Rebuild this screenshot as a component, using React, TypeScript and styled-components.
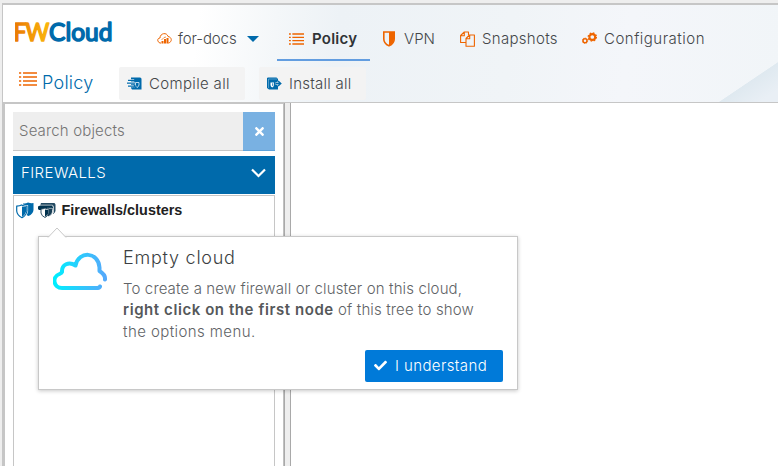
import React from "react";
import styled, { createGlobalStyle } from "styled-components";
import { FaCheck, FaTimes } from "react-icons/fa";

const GlobalStyle = createGlobalStyle`
  *, *::before, *::after { box-sizing: border-box; }
  body {
    margin: 0;
    background: #eeeeee;
    overflow: hidden;
    color: #404244;
    font-family: Inter, "Open Sans", sans-serif;
  }
  svg { display: block; flex: none; }
`;

const Frame = styled.div`
  height: 466px;
  padding: 3px 0 0 2px;
  display: flex;
  flex-direction: column;
`;

const Header = styled.header`
  height: 100px;
  flex: none;
  border-top: 2px solid #c6c6c6;
  border-left: 1px solid #c6c6c6;
  border-bottom: 1px solid #c6c6c6;
  background:
    linear-gradient(146deg, transparent 0 50%, #dfe9f0 51%, #e9eff5 85%) right bottom / 60px 40px no-repeat,
    linear-gradient(97deg, #ffffff 0 25%, #f4f7f9 35%, #edf2f6 43%, #f0f4f7 65%, #f4f6fa 80%, #f1f5f8 100%);
`;

const TopBar = styled.div`
  display: flex;
  height: 56px;
`;

const LogoBox = styled.div`
  width: 118px;
  padding: 10px 0 0 12px;
`;

const NavItem = styled.div<{ $width: number; $pad: number; $gap: number; $active?: boolean }>`
  display: flex;
  align-items: center;
  width: ${p => p.$width}px;
  height: 56px;
  padding: 13px 0 0 ${p => p.$pad}px;
  gap: ${p => p.$gap}px;
  border-bottom: 2px solid ${p => (p.$active ? "#629de0" : "transparent")};
`;

const Label = styled.span<{ $size?: number; $track?: number; $weight?: number; $color?: string }>`
  font-size: ${p => p.$size ?? 15}px;
  font-weight: ${p => p.$weight ?? 350};
  letter-spacing: ${p => p.$track ?? 0}px;
  color: ${p => p.$color ?? "#44474a"};
  line-height: 20px;
  white-space: nowrap;
`;

const Caret = styled.i`
  border: 6px solid transparent;
  border-top: 6px solid #006aab;
  border-bottom: 0;
  margin-left: 4px;
`;

const ActionBar = styled.div`
  display: flex;
  padding: 6px 0 0 16px;
`;

const PageTitle = styled.div`
  display: flex;
  width: 100px;
  gap: 5px;
  padding-top: 4px;
  span { padding-top: 2px; line-height: 20px; }
`;

const Action = styled.button<{ $width: number }>`
  display: flex;
  align-items: center;
  width: ${p => p.$width}px;
  height: 33px;
  margin-right: 14px;
  padding: 0 0 0 8px;
  gap: 7px;
  border: 0;
  border-radius: 2px;
  background: #f3f3f3;
  font-family: inherit;
`;

const Body = styled.div`
  display: flex;
  flex: 1;
  min-height: 0;
`;

const Sidebar = styled.aside`
  display: flex;
  flex-direction: column;
  width: 282px;
  padding: 8px 8px 0;
  border-top: 1px solid #c6c6c6;
  border-left: 3px solid #c6c6c6;
  border-right: 1px solid #c0c0c0;
  background: #fff;
`;

const Gutter = styled.div`
  width: 7px;
  border: solid #a9a9a9;
  border-width: 0 1px;
  background: #eee;
`;

const Workspace = styled.main`
  flex: 1;
  background: #fff;
`;

const Search = styled.div`
  display: flex;
  flex: none;
  height: 39px;
`;

const SearchField = styled.div`
  flex: 1;
  padding: 8px 0 0 6px;
  border-bottom: 1px solid #c6c6c6;
  background: #eee;
`;

const ClearButton = styled.button`
  display: flex;
  align-items: center;
  justify-content: center;
  width: 32px;
  padding: 0;
  border: 0;
  border-bottom: 1px solid #5ea2da;
  background: #79b1e2;
  color: #fff;
  font-size: 13px;
`;

const SectionHeader = styled.div`
  display: flex;
  flex: none;
  justify-content: space-between;
  height: 38px;
  margin-top: 5px;
  padding: 7px 9px 0 8px;
  background: #006aab;
  svg { margin-top: 5px; }
`;

const Tree = styled.div`
  flex: 1;
  margin-top: 1px;
  border: 1px solid #c6c6c6;
  border-bottom: 0;
`;

const TreeNode = styled.div`
  display: flex;
  align-items: center;
  gap: 4px;
  padding: 5px 0 0 2px;
  font: bold 14.4px/18px "Liberation Sans", Arial, sans-serif;
  color: #212121;
  span { padding-left: 1.5px; }
`;

const Popup = styled.section`
  position: absolute;
  left: 38px;
  top: 236px;
  display: flex;
  width: 480px;
  height: 154px;
  border: 1px solid #c8c8c8;
  background: #fff;
  box-shadow: 0 1px 4px rgba(0, 0, 0, 0.22);
`;

const Pointer = styled.svg`
  position: absolute;
  left: 8px;
  top: -10px;
`;

const PopupIcon = styled.div`
  width: 84px;
  padding: 15px 0 0 14px;
`;

const PopupContent = styled.div`
  flex: 1;
  display: flex;
  flex-direction: column;
  padding: 11px 14px 0 0;
`;

const Message = styled.p`
  margin: 10px 0 8px;
  display: flex;
  flex-direction: column;
`;

const MessageLine = styled.span`
  display: block;
  height: 21.33px;
  line-height: 20px;
  white-space: pre;
`;

const Confirm = styled.button`
  display: flex;
  align-items: center;
  align-self: flex-end;
  width: 138px;
  height: 32px;
  padding: 0 0 0 9px;
  gap: 8px;
  border: 0;
  border-radius: 2px;
  background: #007ad9;
  color: #fff;
  font-family: inherit;
  font-size: 13px;
`;

const Logo = () => (
  <svg width="102" height="34" viewBox="0 0 102 34">
    <defs>
      <linearGradient id="brand" x1="0" x2="1">
        <stop offset="0" stopColor="#e97803" />
        <stop offset="1" stopColor="#fbb80b" />
      </linearGradient>
    </defs>
    <g fontFamily="Lato, sans-serif" fontWeight="400" fontSize="25.5" strokeWidth="1.6" strokeLinejoin="round">
      <text x="-1.500" y="25.500" textLength="35" lengthAdjust="spacingAndGlyphs" letterSpacing="-1" fill="url(#brand)" stroke="url(#brand)">FW</text>
      <text x="34" y="25.500" textLength="63.500" lengthAdjust="spacingAndGlyphs" fill="#006aab" stroke="#006aab">Cloud</text>
    </g>
  </svg>
);

const ListIcon = ({ width, height }: { width: number; height: number }) => (
  <svg width={width} height={height} viewBox="0 0 18 16" stroke="#ee6500" strokeWidth="1.6">
    <path d="M0 2h2.200M4 2h14M0 6h2.200M4 6h14M0 10h2.200M4 10h14M0 14h2.200M4 14h14" />
  </svg>
);

const CloudChartIcon = () => (
  <svg width="15" height="14" viewBox="0 0 15 14" fill="none" stroke="#ee6500">
    <path d="M4 11H3C0 10 0 6 3 6C3 1 10 0 11 4.500C15 5 15.500 10 11.500 11" strokeWidth="1" />
    <path d="M5.500 11.500V9M8 11.500V7M10.500 11.500V6" strokeWidth="2" />
    <path d="M4.500 8L7 5.500L9 5" strokeWidth=".7" />
  </svg>
);

const ShieldIcon = () => (
  <svg width="12" height="16" viewBox="0 0 12 16">
    <path d="M.8 1H11.200V8C11.200 11 9 13.500 6 14.800C3 13.500.8 11 .8 8Z" fill="none" stroke="#ee6500" strokeWidth="1.6" />
    <path d="M6 1H11V8C11 11 9 13.500 6 14.800Z" fill="#ee6500" />
  </svg>
);

const CopyIcon = () => (
  <svg width="15" height="16" viewBox="0 0 15 16" fill="none" stroke="#ee6500" strokeWidth="1.1" strokeLinejoin="round">
    <path d="M6 11.500H.6V4.500L4.300 1H8.500V4M.6 4.700H4.300V1" />
    <path d="M6 7.500L9.500 4H14.400V15.200H6ZM6 7.700H9.700V4" />
  </svg>
);

const GearsIcon = () => (
  <svg width="15" height="13" viewBox="0 0 15 13" fill="none" stroke="#ee6500">
    <circle cx="10.300" cy="5" r="2.900" strokeWidth="2.100" />
    <circle cx="10.300" cy="5" r="4.100" strokeWidth="1.300" strokeDasharray="1.610 1.610" />
    <circle cx="3" cy="8.700" r="2" strokeWidth="1.500" />
    <circle cx="3" cy="8.700" r="2.700" strokeWidth=".8" strokeDasharray="1.060 1.060" />
  </svg>
);

const CompileIcon = () => (
  <svg width="15" height="13" viewBox="0 0 15 13">
    <path d="M4 .5H13Q14.500.5 14.500 2V12.500H5L4 11Z" fill="#006aab" />
    <path d="M8.500 5.500H12V8Q11.500 10 10 10.500Q8.500 9.500 8.500 8Z" fill="none" stroke="#cfe4f2" strokeWidth=".9" />
    <path d="M1 3.300H8M0 6.200H8M1 9.100H8" stroke="#fff" strokeWidth="2.200" />
    <path d="M1 3.300H9M0 6.200H8M1 9.100H8" stroke="#006aab" strokeWidth="1.300" />
    <path d="M7 2L9 3.300L7 4.500M6.500 7.800L8.500 9.100L6.500 10.400" fill="none" stroke="#006aab" />
  </svg>
);

const InstallIcon = () => (
  <svg width="15" height="13" viewBox="0 0 15 13">
    <path d="M0 1L1 .5H9.500L11 2V12.500H2L0 11Z" fill="#006aab" />
    <path d="M1.500 2H10M1.500 2V11" fill="none" stroke="#9cc8e4" strokeWidth=".5" />
    <path d="M3.500 5.500H7V8Q6.800 9.700 5.300 10.500Q3.500 9.500 3.500 8Z" fill="#fff" />
    <path d="M5.300 6.300H6.200V8.500L5.300 9.300Z" fill="#006aab" />
    <path d="M8.500 6.500H13.500M11 4L13.500 6.500L11 9" fill="none" stroke="#f3f3f3" strokeWidth="2.400" />
    <path d="M8.500 6.500H14M11 4L13.700 6.500L11 9" fill="none" stroke="#006aab" strokeWidth="1.500" />
  </svg>
);

const ShieldsIcon = () => (
  <svg width="18" height="17" viewBox="0 0 18 17">
    <path d="M7 1.500Q10 1.800 12 .5Q15 1.500 17.500 1V8Q17 12 12.500 14Q8 12 7 8Z" fill="#006aab" />
    <path d="M.7 4.200Q4 4 5.500 3Q8 4.500 11 4.200V9Q10 14 6 16Q1 13 .7 9Z" fill="#fff" stroke="#fff" strokeWidth="2.200" />
    <path d="M.7 4.200Q4 4 5.500 3Q8 4.500 11 4.200V9Q10 14 6 15.700Q1 13 .7 9Z" fill="#fff" stroke="#006aab" strokeWidth="1.200" />
    <path d="M6 4.500Q8 5.300 10.500 5V9Q9 13 6 15Z" fill="#006aab" />
  </svg>
);

const ClusterIcon = () => (
  <svg width="18" height="15" viewBox="0 0 18 15">
    <path d="M3 0H16.500L17.500 1.500V8Q17 10 15 11V3H2Z" fill="#234a62" />
    <path d="M1.500 2.200H14.500L15.500 3.500V10" fill="none" stroke="#fff" strokeWidth=".7" />
    <path d="M0 3.500L1.500 2.800H14L15 4V7H1L0 6Z" fill="#00324e" />
    <path d="M9 5.300H14.500V9Q14 12 10.500 13.500L8 11Z" fill="#183e56" stroke="#fff" strokeWidth=".6" />
    <path d="M3 6Q5.500 6 7 5Q9 6 11 6V10Q10 13 7 14.500Q3.500 13 3 10Z" fill="#fff" stroke="#183e56" strokeWidth=".9" />
    <path d="M7 6.500L10.500 7V10Q9.500 12.500 7 13.800Z" fill="#00324e" />
  </svg>
);

const EmptyCloudIcon = () => (
  <svg width="56" height="42" viewBox="0 0 56 42">
    <defs>
      <linearGradient id="sky" x1="0" x2="1">
        <stop offset="0" stopColor="#00eefe" />
        <stop offset="1" stopColor="#55a9fb" />
      </linearGradient>
    </defs>
    <path d="M47 34.500Q46.500 36 43 36H9C.5 36-1.500 25 6.500 22Q8.800 21 9 20C8.500 12.500 16 9 22.500 13.500C25.500-1.500 45.500-.5 46.500 15.500V19C50.500 21.500 52.500 24 52 27.500" fill="none" stroke="url(#sky)" strokeWidth="4" strokeLinejoin="round" strokeLinecap="round" />
  </svg>
);

export default function App() {
  return (
    <>
      <GlobalStyle />
      <Frame>
        <Header>
          <TopBar>
            <LogoBox><Logo /></LogoBox>
            <NavItem $width={156} $pad={36} $gap={6}>
              <CloudChartIcon /><Label $track={-0.1}>for-docs</Label><Caret />
            </NavItem>
            <NavItem $width={93} $pad={12} $gap={8} $active>
              <ListIcon width={15} height={14} />
              <Label $weight={600} $track={0.25} $color="#303336">Policy</Label>
            </NavItem>
            <NavItem $width={77} $pad={13} $gap={9}>
              <ShieldIcon /><Label $track={0.05}>VPN</Label>
            </NavItem>
            <NavItem $width={122} $pad={13} $gap={7}>
              <CopyIcon /><Label $track={0.3}>Snapshots</Label>
            </NavItem>
            <NavItem $width={140} $pad={13} $gap={7}>
              <GearsIcon /><Label $track={0.5}>Configuration</Label>
            </NavItem>
          </TopBar>
          <ActionBar>
            <PageTitle>
              <ListIcon width={18} height={16} />
              <Label $size={18} $track={0.25} $color="#006aab">Policy</Label>
            </PageTitle>
            <Action $width={126}><CompileIcon /><Label $track={0.34}>Compile all</Label></Action>
            <Action $width={107}><InstallIcon /><Label $track={0.25}>Install all</Label></Action>
          </ActionBar>
        </Header>
        <Body>
          <Sidebar>
            <Search>
              <SearchField><Label $track={0.15} $color="#747474">Search objects</Label></SearchField>
              <ClearButton aria-label="Clear"><FaTimes /></ClearButton>
            </Search>
            <SectionHeader>
              <Label $track={0.42} $color="#fff">FIREWALLS</Label>
              <svg width="15" height="10" viewBox="0 0 15 10" fill="none" stroke="#fff" strokeWidth="2.200">
                <path d="M1 1.500L7.500 8L14 1.500" />
              </svg>
            </SectionHeader>
            <Tree>
              <TreeNode><ShieldsIcon /><ClusterIcon /><span>Firewalls/clusters</span></TreeNode>
            </Tree>
          </Sidebar>
          <Gutter />
          <Workspace />
        </Body>
      </Frame>
      <Popup>
        <Pointer width="20" height="11" viewBox="0 0 20 11">
          <path d="M1 10.500L10 1L19 10.500" fill="#fff" stroke="#c8c8c8" />
          <path d="M2 10.500H18" stroke="#fff" strokeWidth="1.200" />
        </Pointer>
        <PopupIcon><EmptyCloudIcon /></PopupIcon>
        <PopupContent>
          <Label $size={18} $track={0.75} $color="#3c3f42">Empty cloud</Label>
          <Message>
            <MessageLine>
              <Label $track={0.13} $color="#606366">To create a new firewall or cluster on this cloud,</Label>
            </MessageLine>
            <MessageLine>
              <Label $weight={600} $track={0.57} $color="#55585a">right click on the first node</Label>
              <Label $track={0.13} $color="#606366"> of this tree to show</Label>
            </MessageLine>
            <MessageLine>
              <Label $track={0.42} $color="#606366">the options menu.</Label>
            </MessageLine>
          </Message>
          <Confirm><FaCheck /><Label $track={0.4} $color="#fff">I understand</Label></Confirm>
        </PopupContent>
      </Popup>
    </>
  );
}
